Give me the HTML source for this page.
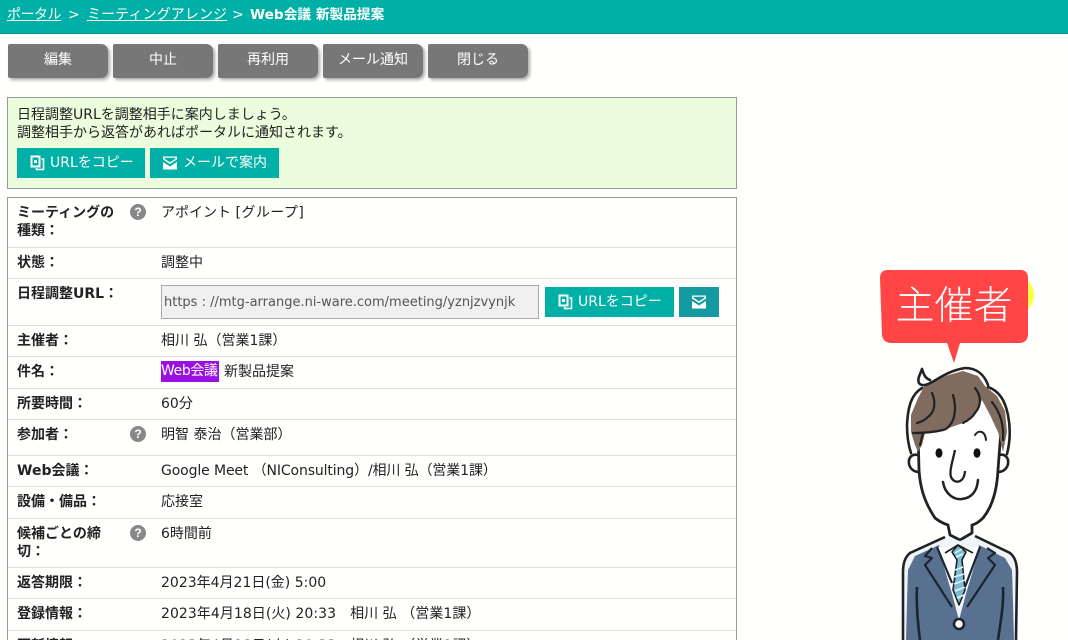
<!DOCTYPE html>
<html lang="ja"><head><meta charset="utf-8"><title>Web会議 新製品提案</title>
<style>
html,body{margin:0;padding:0;background:#fffffd;width:1068px;height:640px;overflow:hidden}
#w{position:relative;width:1068px;height:640px;overflow:hidden;font:14px/20px "DejaVu Sans","Noto Sans CJK JP",sans-serif;color:#222}
.a{position:absolute;white-space:nowrap}
.hd{left:0;top:0;width:1068px;height:33px;background:#00b0a6;border-bottom:1px solid #00918a}
.hd span,.hd u{position:absolute;top:5px;color:#fff;white-space:nowrap}
.b{position:absolute;top:44px;width:100px;height:34px;background:#777;border-radius:2px 7px 7px 2px;box-shadow:2px 2px 3px #aaa;color:#fff;text-align:center;line-height:33px}
.green{left:7px;top:97px;width:728px;height:90px;border:1px solid #999;background:#ebfddc}
.t{left:7px;top:197px;width:728px;height:460px;border:1px solid #999;background:#fffffd}
.l{position:absolute;left:8px;width:728px;height:1px;background:#ddd}
.k{position:absolute;left:17px;font-weight:bold;white-space:nowrap;color:#222}
.v{position:absolute;left:161px;white-space:nowrap}
.q{position:absolute;left:130px;width:16px;height:16px;border-radius:50%;background:#888;color:#fff;font:bold 12px/16px "Liberation Sans",sans-serif;text-align:center}
.tb{position:absolute;height:30px;background:#00b0a6;color:#fff;line-height:29px}
.tb svg{position:absolute;top:7px}
.tb span{position:absolute;top:1px;white-space:nowrap}
</style></head><body><div id="w">
<div class="a hd">
<u style="left:7px;letter-spacing:-.5px">ポータル</u><span style="left:68px">&gt;</span>
<u style="left:87px;letter-spacing:.1px">ミーティングアレンジ</u><span style="left:232px">&gt;</span>
<span style="left:250px;font-weight:bold;font-size:13.700px">Web会議 新製品提案</span>
</div>
<div class="b" style="left:8px">編集</div>
<div class="b" style="left:113px">中止</div>
<div class="b" style="left:218px">再利用</div>
<div class="b" style="left:323px">メール通知</div>
<div class="b" style="left:428px">閉じる</div>

<div class="a green"></div>
<div class="a" style="left:17px;top:105px">日程調整URLを調整相手に案内しましょう。</div>
<div class="a" style="left:17px;top:123px">調整相手から返答があればポータルに通知されます。</div>
<div class="tb" style="left:17px;top:148px;width:128px">
<svg style="left:13px" width="16" height="16" viewBox="0 0 16 16"><path d="M1.500 1.500h8v10h-8z" fill="none" stroke="#fff" stroke-width="2"/><path d="M11.500 4h2v10.500h-7V13" fill="none" stroke="#fff" stroke-width="1.600"/><rect x="4" y="5" width="3" height="3" fill="#fff"/></svg>
<span style="left:33px">URLをコピー</span></div>
<div class="tb" style="left:150px;top:148px;width:129px">
<svg style="left:12px" width="16" height="16" viewBox="0 0 16 16"><path d="M1 1.500h14v3L8 9 1 4.500z" fill="#fff"/><path d="M1 7l7 4.500L15 7v7.500H1z" fill="#fff"/><path d="M2.500 2.800h11v.9L8 7.200 2.500 3.700z" fill="#00b0a6"/></svg>
<span style="left:33px">メールで案内</span></div>

<div class="a t"></div>
<div class="l" style="top:247px"></div><div class="l" style="top:278px"></div><div class="l" style="top:325px"></div><div class="l" style="top:356px"></div><div class="l" style="top:388px"></div><div class="l" style="top:419px"></div><div class="l" style="top:455px"></div><div class="l" style="top:486px"></div><div class="l" style="top:518px"></div><div class="l" style="top:567px"></div><div class="l" style="top:598px"></div><div class="l" style="top:630px"></div>

<div class="k" style="top:203px">ミーティングの</div><div class="k" style="top:221px">種類：</div>
<div class="q" style="top:204px">?</div><div class="v" style="top:203px">アポイント <span style="letter-spacing:.45px">[グループ]</span></div>
<div class="k" style="top:253px">状態：</div><div class="v" style="top:253px">調整中</div>
<div class="k" style="top:284px">日程調整URL：</div>
<div class="a" style="left:161px;top:285px;width:376px;height:32px;padding-left:0;border:1px solid #aaa;background:#f0f0f0;color:#555;line-height:34px;text-indent:2px;font-size:13px">https : //mtg-arrange.ni-ware.com/meeting/yznjzvynjk</div>
<div class="tb" style="left:545px;top:287px;width:129px">
<svg style="left:13px" width="16" height="16" viewBox="0 0 16 16"><path d="M1.500 1.500h8v10h-8z" fill="none" stroke="#fff" stroke-width="2"/><path d="M11.500 4h2v10.500h-7V13" fill="none" stroke="#fff" stroke-width="1.600"/><rect x="4" y="5" width="3" height="3" fill="#fff"/></svg>
<span style="left:33px">URLをコピー</span></div>
<div class="tb" style="left:679px;top:287px;width:40px;background:#169aa2">
<svg style="left:12px" width="16" height="16" viewBox="0 0 16 16"><path d="M1 1.500h14v3L8 9 1 4.500z" fill="#fff"/><path d="M1 7l7 4.500L15 7v7.500H1z" fill="#fff"/><path d="M2.500 2.800h11v.9L8 7.200 2.500 3.700z" fill="#169aa2"/></svg></div>
<div class="k" style="top:331px">主催者：</div><div class="v" style="top:331px">相川 弘（営業1課）</div>
<div class="k" style="top:362px">件名：</div>
<div class="a" style="left:161px;top:361px;height:21px;width:58px;background:#9a10e0;color:#fff;letter-spacing:-.4px;line-height:21px">Web会議</div>
<div class="v" style="top:362px;left:224px">新製品提案</div>
<div class="k" style="top:394px">所要時間：</div><div class="v" style="top:394px">60分</div>
<div class="k" style="top:425px">参加者：</div><div class="q" style="top:426px">?</div><div class="v" style="top:425px">明智 泰治（営業部）</div>
<div class="k" style="top:461px">Web会議：</div><div class="v" style="top:461px;letter-spacing:-.12px">Google Meet （NIConsulting）/相川 弘（営業1課）</div>
<div class="k" style="top:492px">設備・備品：</div><div class="v" style="top:492px">応接室</div>
<div class="k" style="top:524px">候補ごとの締</div><div class="k" style="top:542px">切：</div><div class="q" style="top:525px">?</div><div class="v" style="top:524px">6時間前</div>
<div class="k" style="top:573px">返答期限：</div><div class="v" style="top:573px">2023年4月21日(金) 5:00</div>
<div class="k" style="top:604px">登録情報：</div><div class="v" style="top:604px;letter-spacing:.05px">2023年4月18日(火) 20:33　相川 弘 （営業1課）</div>
<div class="k" style="top:636px">更新情報：</div><div class="v" style="top:636px;letter-spacing:.05px">2023年4月18日(火) 20:33　相川 弘 （営業1課）</div>

<svg class="a" style="left:860px;top:260px" width="208" height="380" viewBox="860 260 208 380">
<circle cx="1014" cy="295" r="20" fill="#ffff44"/>
<path d="M888 270H1020Q1028 270 1028 278V335Q1027 343 1019 343H960L954 363L947 343H892Q883 343 882 335L880 278Q880 270 888 270Z" fill="#ff4545"/>
<text x="954" y="319" text-anchor="middle" font-family="'Noto Sans CJK JP',sans-serif" font-weight="300" font-size="39" fill="#fff">主催者</text>
<g style="filter:blur(.35px)">
<!-- ears -->
<path d="M918 455C905 452 906 473 920 472M999 455C1012 452 1011 473 997 472" fill="#fff" stroke="#222" stroke-width="2.600"/>
<!-- face -->
<path d="M918 430L919 470C920 485 923 500 935 518C940 522 945 524 948 525L950 535L960 540L972 533V525C976 524 980 521 983 518C992 507 997 490 998 470L1001 430L985 390H930Z" fill="#fff" stroke="#222" stroke-width="2.800" stroke-linejoin="round"/>
<!-- hair -->
<path d="M925 385L933 381L945 376L963 371L978 376L985 386L997 396L1005 411L1007 432L1003 452L998 432L990 415L982 400L975 413L963 423L943 430L925 433L922 445L918 452L915 445L911 432L911 415L918 398Z" fill="#806b5f"/>
<path d="M922 369C920 375 917 379 919 383C922 387 927 385 934 381C942 376 952 370 965 368C976 368 984 374 988 385M922 369C924 375 925 378 930 380M988 387C999 391 1005 400 1008 415C1011 430 1010 442 1007 454M922 388C912 394 908 405 907 425C907 434 908 444 911 453" fill="none" stroke="#222" stroke-width="2.600" stroke-linecap="round"/>
<path d="M932 393C936 402 935 412 928 417C925 420 921 422 917 423M953 395C956 405 956 418 950 425C948 428 945 430 943 430M975 388C981 395 982 405 975 413C972 418 967 421 963 423M992 402C1000 412 1004 425 1003 440M913 433C925 433 935 432 943 430M923 433L920 445" fill="none" stroke="#222" stroke-width="2.200" stroke-linecap="round"/>
<path d="M975 435C978 430 985 430 986 440" fill="none" stroke="#222" stroke-width="2" stroke-linecap="round"/>
<!-- face features -->
<ellipse cx="939" cy="453" rx="3.500" ry="4.800" fill="#111"/><ellipse cx="977" cy="453" rx="3.500" ry="4.800" fill="#111"/>
<path d="M955 450C953 460 949 471 951 477C954 484 964 484 965 471" fill="none" stroke="#222" stroke-width="2.300"/>
<path d="M943 482C945 495 955 500 962 499C971 498 977 492 978 480" fill="none" stroke="#222" stroke-width="2.500" stroke-linecap="round"/>
<!-- suit -->
<path d="M903 570V640H1017V570L1010 553L975 536L960 541L945 537L910 553Z" fill="#eef4f8"/>
<path d="M908 570Q907 600 906 640H1014Q1013 600 1012 570L1005 558L979 545L959 620L939 545L915 556Z" fill="#587190"/>
<path d="M938 547H980L967 590L959 608L951 590Z" fill="#fff"/>
<path d="M952 552L958 545L966 552L962 560L965 590L959 605L953 590L957 560Z" fill="#7cbcd6" stroke="#222" stroke-width="1.600" stroke-linejoin="round"/>
<path d="M955 570l8-3M954 577l10-3M954 584l11-4M955 591l10-4M957 598l7-3M955 553l7-4M956 557l7-3" stroke="#e4f6fb" stroke-width="1.500" fill="none"/>
<path d="M945 537L910 553C905 557 903 563 903 572V640M975 536L1010 553C1015 557 1017 563 1017 572L1016 640" fill="none" stroke="#222" stroke-width="2.600"/>
<path d="M945 553L958 545L973 553" fill="none" stroke="#222" stroke-width="1.800"/>
<path d="M937 547L952 583M980 547L965 587M932 548L925 556L932 558L925 565L952 607M987 548L995 553L988 558L995 565L967 607" fill="none" stroke="#1c2430" stroke-width="2.200" stroke-linejoin="round"/>
<path d="M917 587C916 605 918 625 920 640M1003 587C1004 605 1000 625 998 640" fill="none" stroke="#1c2430" stroke-width="2.600"/>
<circle cx="959" cy="624" r="5" fill="#fff" stroke="#1c2430" stroke-width="2.600"/>
</g>
</svg>
</div></body></html>
